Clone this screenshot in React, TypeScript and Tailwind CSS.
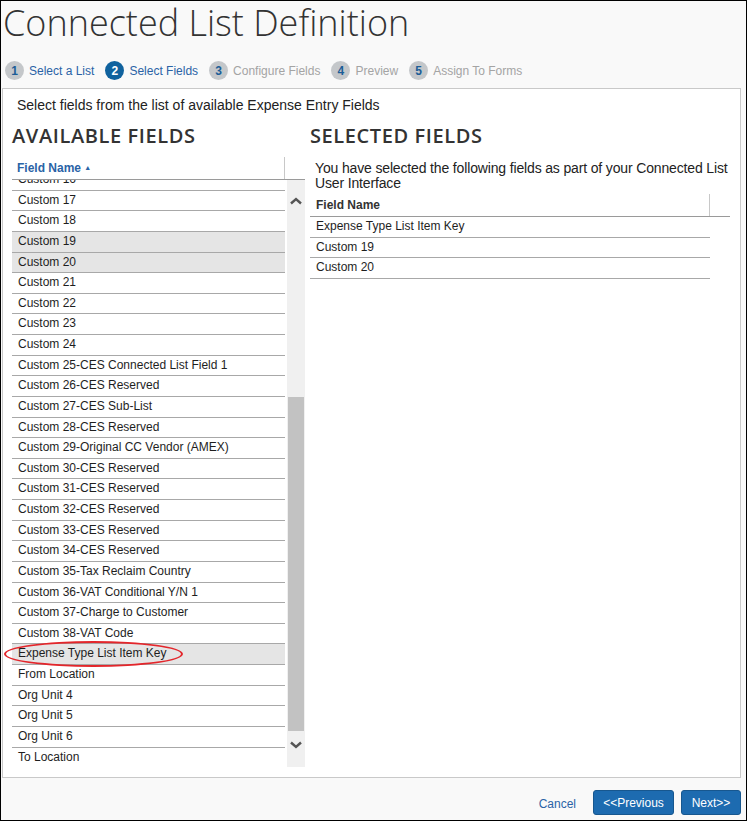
import React from 'react';

const available = [
  'Custom 16',
  'Custom 17',
  'Custom 18',
  'Custom 19',
  'Custom 20',
  'Custom 21',
  'Custom 22',
  'Custom 23',
  'Custom 24',
  'Custom 25-CES Connected List Field 1',
  'Custom 26-CES Reserved',
  'Custom 27-CES Sub-List',
  'Custom 28-CES Reserved',
  'Custom 29-Original CC Vendor (AMEX)',
  'Custom 30-CES Reserved',
  'Custom 31-CES Reserved',
  'Custom 32-CES Reserved',
  'Custom 33-CES Reserved',
  'Custom 34-CES Reserved',
  'Custom 35-Tax Reclaim Country',
  'Custom 36-VAT Conditional Y/N 1',
  'Custom 37-Charge to Customer',
  'Custom 38-VAT Code',
  'Expense Type List Item Key',
  'From Location',
  'Org Unit 4',
  'Org Unit 5',
  'Org Unit 6',
  'To Location',
];

const picked = new Set(['Custom 19', 'Custom 20', 'Expense Type List Item Key']);

const selected = ['Expense Type List Item Key', 'Custom 19', 'Custom 20'];

const steps = [
  { n: 1, label: 'Select a List', state: 'done' },
  { n: 2, label: 'Select Fields', state: 'active' },
  { n: 3, label: 'Configure Fields', state: 'todo' },
  { n: 4, label: 'Preview', state: 'todo' },
  { n: 5, label: 'Assign To Forms', state: 'todo' },
];

const arial = { fontFamily: '"Liberation Sans", Arial, sans-serif' };
const open = { fontFamily: '"Open Sans", "Noto Sans", sans-serif' };

function Chevron({ down }: { down?: boolean }) {
  return (
    <svg width="12" height="8" viewBox="0 0 12 8" className="block">
      <path
        d={down ? 'M1 1.5 L6 6 L11 1.5' : 'M1 6.5 L6 2 L11 6.5'}
        fill="none"
        stroke="#555"
        strokeWidth="2.4"
      />
    </svg>
  );
}

export default function App() {
  return (
    <div
      className="w-[747px] h-[821px] border border-black bg-[#f9f9f9] flex flex-col text-[#222]"
      style={arial}
    >
      {/* Title */}
      <div
        className="pl-[2px] pt-[3px] text-[36px] leading-[37px] font-light text-[#333] whitespace-nowrap"
        style={open}
      >
        Connected List Definition
      </div>

      {/* Wizard steps */}
      <div className="mt-[20px] pl-[4px] flex items-center h-[19px] text-[12px]">
        {steps.map((s) => (
          <div key={s.n} className="flex items-center mr-[11px]">
            <span
              className={`w-[19px] h-[19px] rounded-full flex items-center justify-center text-[12px] font-bold ${
                s.state === 'active' ? 'bg-[#10629e] text-white' : 'bg-[#c4c7ca] text-[#1b5d96]'
              }`}
            >
              {s.n}
            </span>
            <span
              className={`ml-[5px] ${s.state === 'todo' ? 'text-[#a4a4a4]' : 'text-[#2a63a6]'}`}
            >
              {s.label}
            </span>
          </div>
        ))}
      </div>

      {/* Main panel */}
      <div className="mt-[8px] ml-[1px] w-[739px] h-[690px] border border-[#c9c9c9] bg-white flex flex-col">
        <div className="pl-[14px] pt-[8px] text-[14px] leading-[16px] text-[#222]">
          Select fields from the list of available Expense Entry Fields
        </div>

        <div className="flex mt-[9px]">
          {/* Available */}
          <div className="relative ml-[9px] w-[293px] flex flex-col">
            <h2
              className="text-[20px] leading-[27px] font-semibold tracking-[0.6px] text-[#333]"
              style={open}
            >
              AVAILABLE FIELDS
            </h2>
            <div className="mt-[8px] h-[23px] border-b border-[#9a9a9a] flex">
              <div className="w-[273px] border-r border-[#c8c8c8] pl-[5px] pt-[2px] text-[12px] font-bold text-[#2a63a6]">
                Field Name <span className="text-[7px] align-[2px]">▲</span>
              </div>
            </div>
            <div className="flex h-[587px]">
              <div className="w-[273px] overflow-hidden">
                <div className="-mt-[10px]">
                  {available.map((f) => (
                    <div
                      key={f}
                      className={`h-[20.63px] border-b border-[#a8a8a8] pl-[6px] text-[12px] leading-[19.6px] text-[#1e1e1e] ${
                        picked.has(f) ? 'bg-[#e5e5e5]' : ''
                      }`}
                    >
                      {f}
                    </div>
                  ))}
                </div>
              </div>
              {/* scrollbar */}
              <div className="ml-[2px] w-[18px] bg-[#f0f0f0] flex flex-col items-center">
                <div className="h-[217px] w-full flex items-start justify-center pt-[17px]">
                  <Chevron />
                </div>
                <div className="w-[16px] h-[334px] bg-[#c2c2c2]" />
                <div className="w-full flex justify-center pt-[10px]">
                  <Chevron down />
                </div>
              </div>
            </div>
            {/* callout around the added field */}
            <div className="absolute left-[-8px] top-[519px] w-[179px] h-[26px] rounded-[50%] border-2 border-[#e3262b]" />
          </div>

          {/* Selected */}
          <div className="ml-[5px] flex-1 flex flex-col">
            <h2
              className="text-[20px] leading-[27px] font-semibold tracking-[0.6px] text-[#333]"
              style={open}
            >
              SELECTED FIELDS
            </h2>
            <p className="mt-[12px] pl-[5px] text-[14px] leading-[15px] tracking-[-0.15px] text-[#222]">
              You have selected the following fields as part of your Connected List User Interface
            </p>
            <div className="mt-[3px] w-[420px] h-[23px] border-b border-[#9a9a9a] flex">
              <div className="w-[400px] border-r border-[#c8c8c8] pl-[6px] pt-[2px] text-[12px] font-bold text-[#333]">
                Field Name
              </div>
            </div>
            {selected.map((f) => (
              <div
                key={f}
                className="w-[400px] h-[20.63px] border-b border-[#a8a8a8] pl-[6px] text-[12px] leading-[19.6px] text-[#1e1e1e]"
              >
                {f}
              </div>
            ))}
          </div>
        </div>
      </div>

      {/* Footer */}
      <div className="flex-1 flex items-start justify-end pt-[12px] pr-[5px] text-[12px]">
        <a className="mt-[5px] mr-[17px] text-[#2a63a6]">Cancel</a>
        <button className="w-[81px] h-[25px] rounded-[3px] bg-[#1d6bb0] border border-[#17578f] text-white text-[12px]">
          &lt;&lt;Previous
        </button>
        <button className="ml-[7px] w-[60px] h-[25px] rounded-[3px] bg-[#1d6bb0] border border-[#17578f] text-white text-[12px]">
          Next&gt;&gt;
        </button>
      </div>
    </div>
  );
}
